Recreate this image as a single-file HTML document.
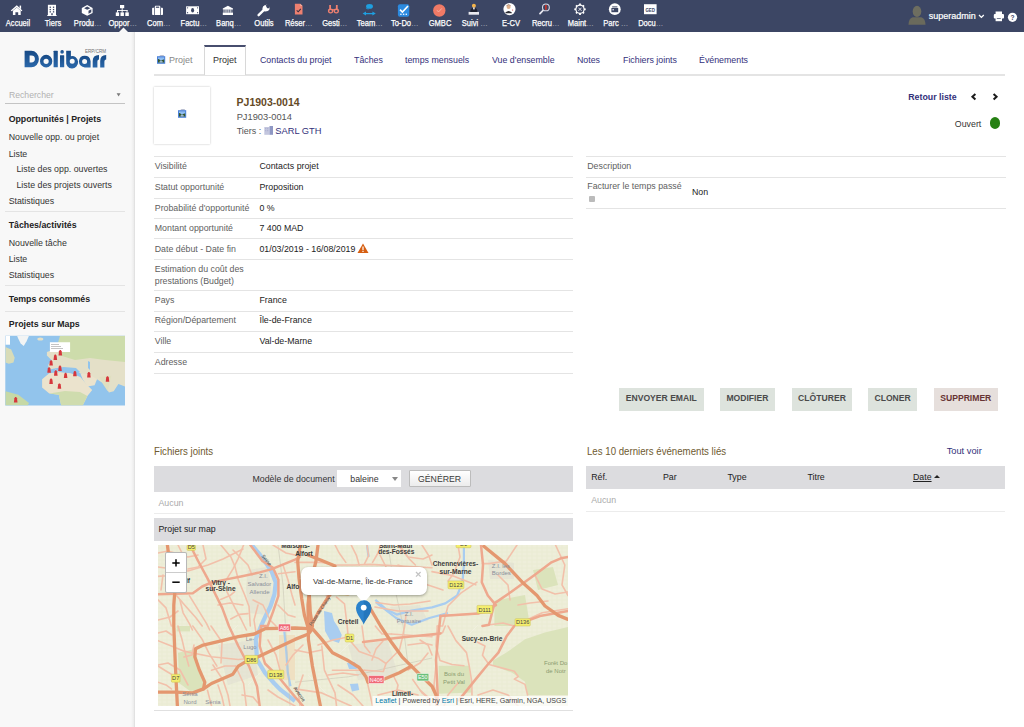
<!DOCTYPE html><html><head><meta charset="utf-8"><style>
html,body{margin:0;padding:0;width:1024px;height:727px;overflow:hidden;background:#fff;font-family:"Liberation Sans",sans-serif}
.t{position:absolute;white-space:nowrap;line-height:1}
.r{position:absolute}
svg{position:absolute;overflow:visible}
</style></head><body>
<div class="r" style="left:0px;top:0px;width:1024px;height:32px;background:#3c4664;"></div>
<div class="r" style="left:0px;top:32px;width:134px;height:695px;background:#f8f8f8;"></div>
<div class="r" style="left:131px;top:32px;width:3px;height:695px;background:linear-gradient(to right, rgba(0,0,0,0), rgba(0,0,0,0.05));"></div>
<div class="r" style="left:134px;top:32px;width:1px;height:695px;background:#e2e2e2;"></div>
<svg style="left:0;top:0" width="1024" height="32">
<g fill="#fff">
 <!-- home -->
 <polygon points="10.8,10.4 16.8,5.2 22.4,10.4 21.4,11.2 16.8,7.3 11.8,11.2"/>
 <rect x="19.6" y="5.6" width="1.5" height="3.2"/>
 <polygon points="12.9,10.8 16.8,7.6 20.7,10.8 20.7,15 18.2,15 18.2,12.3 15.4,12.3 15.4,15 12.9,15"/>
 <!-- building -->
 <rect x="47.9" y="4.8" width="8.1" height="10.6"/>
 <rect x="47.3" y="15" width="9.3" height="1"/>
 <!-- cube -->
 <polygon points="87.2,5 92.6,7.9 92.6,13 87.2,15.7 81.8,13 81.8,7.9"/>
 <!-- sitemap -->
 <rect x="120" y="5" width="4.2" height="3.2"/>
 <rect x="121.7" y="8" width="0.9" height="2.4"/>
 <rect x="117" y="10" width="10.5" height="0.9"/>
 <rect x="117" y="10" width="0.9" height="2.6"/><rect x="121.7" y="10" width="0.9" height="2.6"/><rect x="126.6" y="10" width="0.9" height="2.6"/>
 <rect x="115.8" y="12.4" width="3.3" height="3.6"/><rect x="120.5" y="12.4" width="3.4" height="3.6"/><rect x="125.3" y="12.4" width="3.5" height="3.6"/>
 <!-- briefcase -->
 <rect x="152.1" y="7.8" width="10.9" height="7.2" rx="0.8"/>
 <rect x="154.9" y="5.8" width="5.3" height="2.5" rx="0.6"/>
 <!-- money -->
 <rect x="186.1" y="6.3" width="12.9" height="7.9"/>
 <!-- bank -->
 <polygon points="222.8,8.6 227.9,5.8 233,8.6 233,9.5 222.8,9.5"/>
 <rect x="223.6" y="9.2" width="8.6" height="3.6"/>
 <rect x="222.8" y="12.6" width="10.2" height="2.4"/>
 <!-- wrench -->
 <path d="M258.6,15.2 L264.2,9.6" stroke="#fff" stroke-width="2.4" stroke-linecap="round"/>
 <path d="M263.2,8.8 A3.2,3.2 0 1 1 267.2,11.2 L266.6,9.4 L268.4,7.6 L266.9,5.6 L264.6,6.6 Z" />
 <circle cx="265.4" cy="8.6" r="2.9"/>
 <!-- E-CV circle -->
 <circle cx="509.5" cy="9.1" r="6.1"/>
 <!-- Parc circle -->
 <circle cx="614.8" cy="9.2" r="5.9"/>
 <!-- Docu -->
 <rect x="644" y="4.2" width="12.6" height="10"/>
 <!-- help -->
 <circle cx="1012.5" cy="17.3" r="4.6"/>
 <!-- printer -->
 <rect x="995.6" y="11.5" width="6.4" height="3"/>
 <rect x="993.8" y="14" width="10.2" height="4.6" rx="1"/>
 <rect x="995.6" y="17" width="6.4" height="4.2"/>
</g>
<g fill="#3c4664">
 <rect x="49.6" y="6.6" width="1.3" height="1.3"/><rect x="52.9" y="6.6" width="1.3" height="1.3"/>
 <rect x="49.6" y="8.9" width="1.3" height="1.3"/><rect x="52.9" y="8.9" width="1.3" height="1.3"/>
 <rect x="49.6" y="11.2" width="1.3" height="1.3"/><rect x="52.9" y="11.2" width="1.3" height="1.3"/>
 <rect x="51.3" y="13.2" width="1.4" height="2"/>
 <polygon points="87.2,6.5 90.3,8.2 87.2,9.7 84.1,8.2"/>
 <polygon points="88.5,10.7 91.3,9.3 91.3,12.3 88.5,13.8"/>
 <rect x="154.2" y="7.8" width="0.7" height="7.2"/><rect x="160.2" y="7.8" width="0.7" height="7.2"/>
 <rect x="155.9" y="6.6" width="3.3" height="1.2"/>
 <ellipse cx="192.6" cy="10.2" rx="1.5" ry="2.3"/>
 <circle cx="187.6" cy="7.8" r="0.6"/><circle cx="197.6" cy="7.8" r="0.6"/><circle cx="187.6" cy="12.7" r="0.6"/><circle cx="197.6" cy="12.7" r="0.6"/>
 <rect x="224.4" y="9.6" width="1.1" height="3"/><rect x="226.5" y="9.6" width="1.1" height="3"/><rect x="228.6" y="9.6" width="1.1" height="3"/><rect x="230.6" y="9.6" width="1.1" height="3"/>
 <path d="M265.6,5.2 L267.2,8.2 L269.4,8.2 L269.4,4.6 Z"/>
 <rect x="996.8" y="18.2" width="4" height="0.7"/>
</g>
<g stroke="#fff" stroke-width="1.8">
 <line x1="580" y1="3.6" x2="580" y2="15"/><line x1="574.3" y1="9.3" x2="585.7" y2="9.3"/>
 <line x1="576" y1="5.3" x2="584" y2="13.3"/><line x1="584" y1="5.3" x2="576" y2="13.3"/>
</g>
<circle cx="580" cy="9.3" r="4.7" fill="#fff"/>
<circle cx="580" cy="9.3" r="3.5" fill="#3c4664"/>
<path d="M578.4,7.7 L581.6,10.9 M581.6,7.7 L578.4,10.9" stroke="#e8e8f0" stroke-width="0.9"/>
<!-- Reser doc -->
<path d="M294.9,3.8 L300.3,3.8 L302.5,6 L302.5,14.4 L294.9,14.4 Z" fill="#ee8070"/>
<path d="M300.3,3.8 L300.3,6 L302.5,6 Z" fill="#f5b0a0"/>
<path d="M296.7,10.4 L298.2,11.8 L300.8,8.8" fill="none" stroke="#3c3040" stroke-width="1.1"/>
<!-- binoculars -->
<g fill="#ee8070">
 <ellipse cx="330.6" cy="11" rx="2.7" ry="2.4"/><ellipse cx="336.3" cy="11" rx="2.7" ry="2.4"/>
 <rect x="329.2" y="5" width="1.8" height="5"/><rect x="335.9" y="5" width="1.8" height="5"/>
 <rect x="331" y="9.2" width="4.9" height="1.3"/>
</g>
<ellipse cx="330.6" cy="11.2" rx="1.3" ry="1.1" fill="#3c4664"/><ellipse cx="336.3" cy="11.2" rx="1.3" ry="1.1" fill="#3c4664"/>
<!-- team -->
<g fill="#1e9fe0">
 <ellipse cx="369.5" cy="6.4" rx="3.4" ry="2.4"/>
 <path d="M365.6,7.5 Q366.3,9.8 369,9.6 L367,8.2 Z"/>
 <polygon points="362.6,13.6 366,11.6 366,12.9 372.4,12.9 372.4,11.6 375.8,13.6 372.4,15.6 372.4,14.3 366,14.3 366,15.6"/>
</g>
<!-- todo -->
<rect x="397.9" y="4.3" width="11.4" height="12.4" rx="2" fill="#2b8ae0"/>
<path d="M400,9.6 L402.4,12 L408,6" fill="none" stroke="#fff" stroke-width="1.6"/>
<g fill="#e8f2ff"><rect x="400.2" y="13.6" width="1.4" height="1.4"/><rect x="402.9" y="13.6" width="1.4" height="1.4"/><rect x="405.6" y="13.6" width="1.4" height="1.4"/></g>
<!-- GMBC -->
<circle cx="439.3" cy="10.5" r="6.2" fill="#f07a66"/>
<path d="M437,10.2 L438.5,12 L441.8,8.4" fill="none" stroke="#f7b4a8" stroke-width="0.9"/>
<!-- suivi -->
<rect x="468.6" y="11.9" width="10.4" height="2.8" fill="#e9e9ee"/>
<path d="M470.2,11.9 Q470.5,8 473.8,7.6 Q477.2,8 477.4,11.9 Z" fill="#1f2230"/>
<circle cx="473.9" cy="5.8" r="2" fill="#f3b34a"/>
<rect x="473.1" y="7.4" width="1.6" height="2" fill="#e9e9ee"/>
<!-- E-CV inner -->
<circle cx="508.6" cy="7" r="2" fill="#e0b08a"/>
<path d="M506.4,6.4 Q508.6,3.8 510.8,6.2 L510.6,5.4 Q508.6,3.6 506.6,5.4 Z" fill="#6b3a20"/>
<path d="M505.4,12.6 Q508.6,9.4 511.8,12.6 L511.8,13.2 L505.4,13.2 Z" fill="#2a2a30"/>
<circle cx="512.6" cy="10" r="0.6" fill="#d04040"/>
<!-- recru -->
<line x1="540" y1="13.6" x2="543.4" y2="10" stroke="#e8e8f0" stroke-width="1.8" stroke-linecap="round"/>
<circle cx="545.9" cy="7.4" r="3.4" fill="#3c4664" stroke="#d8d8e4" stroke-width="1.1"/>
<rect x="545.2" y="5" width="1.4" height="4.8" fill="#e03020"/>
<!-- parc inner -->
<rect x="611.4" y="8" width="6.8" height="4.2" fill="#3c4664"/>
<rect x="612.2" y="6.4" width="5.2" height="1" fill="#3c4664"/>
<rect x="612.4" y="9" width="1.6" height="1.4" fill="#c8c8d8"/>
<!-- docu inner -->
<text x="645.4" y="11.6" font-family="Liberation Sans" font-weight="700" font-size="4.6" fill="#3c4664" textLength="9.6" lengthAdjust="spacingAndGlyphs">GED</text>
<!-- help -->
<text x="1010.6" y="19.8" font-family="Liberation Sans" font-weight="700" font-size="6.6" fill="#3c4664">?</text>
<!-- chevron -->
<polyline points="979,15 981.4,17.4 983.8,15" fill="none" stroke="#fff" stroke-width="1.3"/>
<!-- avatar -->
<ellipse cx="917" cy="11.4" rx="4.3" ry="5.6" fill="#6e6e60"/>
<path d="M908.5,24.8 Q908.6,18.4 912.6,17.2 L921.4,17.2 Q925.4,18.4 925.5,24.8 Z" fill="#6a6a5c"/>
</svg>
<div class="t" style="left:-7.3px;top:19.25px;width:50px;text-align:center;font-size:9px;color:#fff;-webkit-text-stroke:0.25px #fff;transform:scaleX(0.84)">Accueil</div>
<div class="t" style="left:27.9px;top:19.25px;width:50px;text-align:center;font-size:9px;color:#fff;-webkit-text-stroke:0.25px #fff;transform:scaleX(0.84)">Tiers</div>
<div class="t" style="left:63.1px;top:19.25px;width:50px;text-align:center;font-size:9px;color:#fff;-webkit-text-stroke:0.25px #fff;transform:scaleX(0.84)">Produ<span style="color:rgba(255,255,255,0.5);-webkit-text-stroke:0;letter-spacing:0.6px">…</span></div>
<div class="t" style="left:98.3px;top:19.25px;width:50px;text-align:center;font-size:9px;color:#fff;-webkit-text-stroke:0.25px #fff;transform:scaleX(0.84)">Oppor<span style="color:rgba(255,255,255,0.5);-webkit-text-stroke:0;letter-spacing:0.6px">…</span></div>
<div class="t" style="left:133.5px;top:19.25px;width:50px;text-align:center;font-size:9px;color:#fff;-webkit-text-stroke:0.25px #fff;transform:scaleX(0.84)">Com<span style="color:rgba(255,255,255,0.5);-webkit-text-stroke:0;letter-spacing:0.6px">…</span></div>
<div class="t" style="left:168.7px;top:19.25px;width:50px;text-align:center;font-size:9px;color:#fff;-webkit-text-stroke:0.25px #fff;transform:scaleX(0.84)">Factu<span style="color:rgba(255,255,255,0.5);-webkit-text-stroke:0;letter-spacing:0.6px">…</span></div>
<div class="t" style="left:203.9px;top:19.25px;width:50px;text-align:center;font-size:9px;color:#fff;-webkit-text-stroke:0.25px #fff;transform:scaleX(0.84)">Banq<span style="color:rgba(255,255,255,0.5);-webkit-text-stroke:0;letter-spacing:0.6px">…</span></div>
<div class="t" style="left:239.1px;top:19.25px;width:50px;text-align:center;font-size:9px;color:#fff;-webkit-text-stroke:0.25px #fff;transform:scaleX(0.84)">Outils</div>
<div class="t" style="left:274.3px;top:19.25px;width:50px;text-align:center;font-size:9px;color:#fff;-webkit-text-stroke:0.25px #fff;transform:scaleX(0.84)">Réser<span style="color:rgba(255,255,255,0.5);-webkit-text-stroke:0;letter-spacing:0.6px">…</span></div>
<div class="t" style="left:309.5px;top:19.25px;width:50px;text-align:center;font-size:9px;color:#fff;-webkit-text-stroke:0.25px #fff;transform:scaleX(0.84)">Gesti<span style="color:rgba(255,255,255,0.5);-webkit-text-stroke:0;letter-spacing:0.6px">…</span></div>
<div class="t" style="left:344.7px;top:19.25px;width:50px;text-align:center;font-size:9px;color:#fff;-webkit-text-stroke:0.25px #fff;transform:scaleX(0.84)">Team<span style="color:rgba(255,255,255,0.5);-webkit-text-stroke:0;letter-spacing:0.6px">…</span></div>
<div class="t" style="left:379.9px;top:19.25px;width:50px;text-align:center;font-size:9px;color:#fff;-webkit-text-stroke:0.25px #fff;transform:scaleX(0.84)">To-Do<span style="color:rgba(255,255,255,0.5);-webkit-text-stroke:0;letter-spacing:0.6px">…</span></div>
<div class="t" style="left:415.1px;top:19.25px;width:50px;text-align:center;font-size:9px;color:#fff;-webkit-text-stroke:0.25px #fff;transform:scaleX(0.84)">GMBC</div>
<div class="t" style="left:450.3px;top:19.25px;width:50px;text-align:center;font-size:9px;color:#fff;-webkit-text-stroke:0.25px #fff;transform:scaleX(0.84)">Suivi <span style="color:rgba(255,255,255,0.5);-webkit-text-stroke:0;letter-spacing:0.6px">…</span></div>
<div class="t" style="left:485.5px;top:19.25px;width:50px;text-align:center;font-size:9px;color:#fff;-webkit-text-stroke:0.25px #fff;transform:scaleX(0.84)">E-CV</div>
<div class="t" style="left:520.7px;top:19.25px;width:50px;text-align:center;font-size:9px;color:#fff;-webkit-text-stroke:0.25px #fff;transform:scaleX(0.84)">Recru<span style="color:rgba(255,255,255,0.5);-webkit-text-stroke:0;letter-spacing:0.6px">…</span></div>
<div class="t" style="left:555.9px;top:19.25px;width:50px;text-align:center;font-size:9px;color:#fff;-webkit-text-stroke:0.25px #fff;transform:scaleX(0.84)">Maint<span style="color:rgba(255,255,255,0.5);-webkit-text-stroke:0;letter-spacing:0.6px">…</span></div>
<div class="t" style="left:591.1px;top:19.25px;width:50px;text-align:center;font-size:9px;color:#fff;-webkit-text-stroke:0.25px #fff;transform:scaleX(0.84)">Parc <span style="color:rgba(255,255,255,0.5);-webkit-text-stroke:0;letter-spacing:0.6px">…</span></div>
<div class="t" style="left:626.3px;top:19.25px;width:50px;text-align:center;font-size:9px;color:#fff;-webkit-text-stroke:0.25px #fff;transform:scaleX(0.84)">Docu<span style="color:rgba(255,255,255,0.5);-webkit-text-stroke:0;letter-spacing:0.6px">…</span></div>
<svg style="left:0;top:0" width="1024" height="32"><polygon points="119,32 123.5,27.6 128,32" fill="#f8f8f8"/></svg>
<div class="t" style="left:928.76px;top:11.75px;font-size:9px;color:#fff;font-weight:400;-webkit-text-stroke:0.2px #fff;">superadmin</div>
<svg style="left:0;top:0" width="134" height="80"><defs><linearGradient id="lg" x1="0" y1="0" x2="0" y2="1"><stop offset="0" stop-color="#174a86"/><stop offset="1" stop-color="#2b68aa"/></linearGradient></defs>
<g fill="url(#lg)" fill-rule="evenodd">
<path d="M24.6,50.8 H31.3 A7.6,8.25 0 0 1 31.3,67.3 H24.6 Z M29.6,55.6 H31.3 A3.6,3.45 0 0 1 31.3,62.5 H29.6 Z"/>
<path d="M40,61.15 A6.15,6.3 0 1 0 52.3,61.15 A6.15,6.3 0 1 0 40,61.15 Z M43.5,61.3 A2.6,2.6 0 1 0 48.7,61.3 A2.6,2.6 0 1 0 43.5,61.3 Z"/>
<rect x="53.6" y="50.8" width="4.2" height="16.5" rx="0.4"/>
<circle cx="62.1" cy="51.9" r="1.8"/>
<rect x="60" y="55.2" width="4.2" height="12.1" rx="0.4"/>
<path d="M66.2,50.8 H70.9 V56.2 A6,6.2 0 1 1 66.2,61.2 Z M69.7,61.3 A2.5,2.5 0 1 0 74.7,61.3 A2.5,2.5 0 1 0 69.7,61.3 Z"/>
<path d="M78.9,61.2 A5.9,6.2 0 0 1 90.6,61.2 V67.4 H84.8 A5.9,6.2 0 0 1 78.9,61.2 Z M82.1,61.4 A2.5,2.5 0 1 0 87.1,61.4 A2.5,2.5 0 1 0 82.1,61.4 Z"/>
<path d="M92.7,67.4 V61 Q92.7,55 99,55 V59.6 Q97.4,59.6 97.4,61.4 V67.4 Z"/>
<path d="M100.2,67.4 V61 Q100.2,55 106.2,55 V59.6 Q104.4,59.6 104.4,61.4 V67.4 Z"/>
</g>
<text x="85" y="52.7" font-family="Liberation Sans" font-size="4.6" fill="#707070" textLength="21" lengthAdjust="spacingAndGlyphs">ERP/CRM</text></svg>
<div class="t" style="left:8.82px;top:89.74px;font-size:9.6px;color:#b2b2b2;font-weight:400;transform:scaleX(0.9);transform-origin:8.82px 0;transform-origin:0 0;">Rechercher</div>
<svg style="left:0;top:0" width="134" height="110"><polygon points="116.6,93.3 120.6,93.3 118.6,96.6" fill="#7a7a7a"/></svg>
<div class="r" style="left:5px;top:103px;width:120px;height:1px;background:#c4c4c4;"></div>
<div class="t" style="left:8.67px;top:114.72px;font-size:8.8px;color:#222;font-weight:700;">Opportunités | Projets</div>
<div class="t" style="left:8.67px;top:133.12px;font-size:8.8px;color:#333;font-weight:400;">Nouvelle opp. ou projet</div>
<div class="t" style="left:8.67px;top:149.52px;font-size:8.8px;color:#333;font-weight:400;">Liste</div>
<div class="t" style="left:16.47px;top:165.22px;font-size:8.8px;color:#333;font-weight:400;">Liste des opp. ouvertes</div>
<div class="t" style="left:16.47px;top:180.92px;font-size:8.8px;color:#333;font-weight:400;">Liste des projets ouverts</div>
<div class="t" style="left:8.67px;top:196.92px;font-size:8.8px;color:#333;font-weight:400;">Statistiques</div>
<div class="r" style="left:5px;top:211px;width:120px;height:1px;background:#e4e4e4;"></div>
<div class="t" style="left:8.67px;top:220.82px;font-size:8.8px;color:#222;font-weight:700;">Tâches/activités</div>
<div class="t" style="left:8.67px;top:239.02px;font-size:8.8px;color:#333;font-weight:400;">Nouvelle tâche</div>
<div class="t" style="left:8.67px;top:255.02px;font-size:8.8px;color:#333;font-weight:400;">Liste</div>
<div class="t" style="left:8.67px;top:271.02px;font-size:8.8px;color:#333;font-weight:400;">Statistiques</div>
<div class="r" style="left:5px;top:285px;width:120px;height:1px;background:#e4e4e4;"></div>
<div class="t" style="left:8.67px;top:294.62px;font-size:8.8px;color:#222;font-weight:700;">Temps consommés</div>
<div class="r" style="left:5px;top:311px;width:120px;height:1px;background:#e4e4e4;"></div>
<div class="t" style="left:8.87px;top:319.92px;font-size:8.8px;color:#222;font-weight:700;">Projets sur Maps</div>
<svg style="left:0;top:0" width="134" height="410"><defs><clipPath id="wm"><rect x="5.3" y="335.8" width="119.7" height="69.8"/></clipPath></defs><g clip-path="url(#wm)"><rect x="5" y="335" width="121" height="71" fill="#92c4ec"/><path d="M46.9,351.9 L54.1,349.5 L60,341.2 L63.6,335.8 L125,335.8 L125,386.4 L118.4,384 L113.7,391.2 L108.9,392.4 L104.1,384 L97,379.3 L92.2,381.7 L87.4,375.7 L80.3,373.3 L76.7,371 L70.7,368.6 L63.6,368.6 L58.8,372.1 L54.1,368.6 L49.3,369.8 L48.1,365 L51.7,360.2 L46.9,355.5 Z" fill="#e4e0c8"/><path d="M60,335.8 L125,335.8 L125,362 L105,360 L90,358 L75,360 L62,356 L56,350 Z" fill="#cddcab"/><path d="M42.1,379.3 L49.3,373.3 L60,372.1 L70.7,373.3 L80.3,376.9 L87.4,385.3 L92.2,390 L87.4,396 L82.7,405.5 L61.2,405.5 L58.8,394.8 L49.3,393.6 L42.1,387.6 Z" fill="#ebe3cd"/><path d="M49.3,393.6 L58.8,394.8 L61.2,405.5 L82.7,405.5 L87.4,396 L80,392 L65,391 Z" fill="#cfdcae"/><path d="M80.3,373.3 L89.8,374.5 L97,379.3 L94.6,385.3 L87.4,386.4 L82.7,379.3 Z" fill="#ebe3cd"/><path d="M99.4,376.9 L111.3,375.7 L108.9,386.4 L107.7,391.2 L102.9,384 Z" fill="#e0dfc0"/><path d="M5.4,347.1 L11.2,349.5 L14.7,357.8 L13.5,362.6 L8.8,363.8 L5.4,362.6 Z" fill="#d8dcb8"/><path d="M5.4,391.2 L18.3,394.8 L29,403.1 L27.8,405.5 L5.4,405.5 Z" fill="#c6d9a6"/><path d="M17.1,335.8 L29,335.8 L26.6,341.2 L23.7,345.9 L20.7,343.5 L18.3,338.8 Z" fill="#f2f4f4"/><ellipse cx="40.3" cy="339" rx="3" ry="1.6" fill="#e4e0c8"/><path d="M54,368.6 L63.6,367 L76,368 L80,372 L70,373 L60,372 Z" fill="#92c4ec"/><path d="M88,361 L90,362 L90,370 L88,368 Z" fill="#92c4ec"/><rect x="5.4" y="335.8" width="4.6" height="8.9" fill="#fff"/><path d="M49.9,342.3 H70.1 V351.9 H61.2 L60,353.2 L58.8,351.9 H49.9 Z" fill="#fff"/><g fill="#888"><rect x="51" y="344" width="8" height="0.5"/><rect x="51" y="346" width="10" height="0.5"/><rect x="51" y="348" width="12" height="0.5"/></g><path d="M58.5,355.5 L59.0,351.3 L59.8,350.1 L60.8,350.1 L61.599999999999994,351.3 L62.099999999999994,355.5 Z" fill="#d6373c"/><path d="M53.5,360 L54.0,355.8 L54.8,354.6 L55.8,354.6 L56.599999999999994,355.8 L57.099999999999994,360 Z" fill="#d6373c"/><path d="M49.300000000000004,365.6 L49.800000000000004,361.40000000000003 L50.6,360.20000000000005 L51.6,360.20000000000005 L52.4,361.40000000000003 L52.9,365.6 Z" fill="#d6373c"/><path d="M47.300000000000004,372.7 L47.800000000000004,368.5 L48.6,367.3 L49.6,367.3 L50.4,368.5 L50.9,372.7 Z" fill="#d6373c"/><path d="M58.2,370.9 L58.7,366.7 L59.5,365.5 L60.5,365.5 L61.3,366.7 L61.8,370.9 Z" fill="#d6373c"/><path d="M54.0,375.7 L54.5,371.5 L55.3,370.3 L56.3,370.3 L57.099999999999994,371.5 L57.599999999999994,375.7 Z" fill="#d6373c"/><path d="M63.8,378.1 L64.3,373.90000000000003 L65.1,372.70000000000005 L66.1,372.70000000000005 L66.89999999999999,373.90000000000003 L67.39999999999999,378.1 Z" fill="#d6373c"/><path d="M73.10000000000001,376.3 L73.60000000000001,372.1 L74.4,370.90000000000003 L75.4,370.90000000000003 L76.2,372.1 L76.7,376.3 Z" fill="#d6373c"/><path d="M87.10000000000001,377.5 L87.60000000000001,373.3 L88.4,372.1 L89.4,372.1 L90.2,373.3 L90.7,377.5 Z" fill="#d6373c"/><path d="M105.7,381.7 L106.2,377.5 L107.0,376.3 L108.0,376.3 L108.8,377.5 L109.3,381.7 Z" fill="#d6373c"/><path d="M49.300000000000004,384 L49.800000000000004,379.8 L50.6,378.6 L51.6,378.6 L52.4,379.8 L52.9,384 Z" fill="#d6373c"/><path d="M57.6,388.8 L58.1,384.6 L58.9,383.40000000000003 L59.9,383.40000000000003 L60.699999999999996,384.6 L61.199999999999996,388.8 Z" fill="#d6373c"/><path d="M13.899999999999999,402.5 L14.399999999999999,398.3 L15.2,397.1 L16.2,397.1 L17.0,398.3 L17.5,402.5 Z" fill="#d6373c"/></g></svg>
<div class="r" style="left:154px;top:74px;width:851px;height:2px;background:#e4e4e4;"></div>
<div class="r" style="left:204px;top:45px;width:42px;height:30px;background:#fff;border:1px solid #d8d8d8;border-top:2px solid #474e6e;border-bottom:none;box-sizing:border-box"></div>
<svg style="left:157px;top:54.5px" width="9" height="9"><path d="M3.5,0.2 L6.5,0.2 L7.6,1.4 L1.5,1.4 Z" fill="#a0a8c0"/><rect x="0" y="1.2" width="8.2" height="7.6" fill="#4c82d8"/><rect x="1" y="2.4" width="6.2" height="5" fill="#8fbdf2"/><path d="M1,7.4 L1,4.2 Q2,3.6 2.8,5 Q4,6.4 5.2,5 Q6.2,4 7.2,4.6 L7.2,7.4 Z" fill="#34552c"/><rect x="2.6" y="6.2" width="3" height="1.2" fill="#b8d0f0"/></svg>
<div class="t" style="left:168.71px;top:55.27px;font-size:9.8px;color:#888;font-weight:400;transform:scaleX(0.92);transform-origin:168.71px 0;transform-origin:0 0;">Projet</div>
<div class="t" style="left:213.21px;top:55.27px;font-size:9.8px;color:#333;font-weight:400;transform:scaleX(0.92);transform-origin:213.21px 0;transform-origin:0 0;">Projet</div>
<div class="t" style="left:259.71px;top:55.27px;font-size:9.8px;color:#33307a;font-weight:400;transform:scaleX(0.9);transform-origin:259.71px 0;transform-origin:0 0;">Contacts du projet</div>
<div class="t" style="left:353.91px;top:55.27px;font-size:9.8px;color:#33307a;font-weight:400;transform:scaleX(0.9);transform-origin:353.91px 0;transform-origin:0 0;">Tâches</div>
<div class="t" style="left:405.21px;top:55.27px;font-size:9.8px;color:#33307a;font-weight:400;transform:scaleX(0.9);transform-origin:405.21px 0;transform-origin:0 0;">temps mensuels</div>
<div class="t" style="left:492.21px;top:55.27px;font-size:9.8px;color:#33307a;font-weight:400;transform:scaleX(0.9);transform-origin:492.21px 0;transform-origin:0 0;">Vue d&#x27;ensemble</div>
<div class="t" style="left:577.21px;top:55.27px;font-size:9.8px;color:#33307a;font-weight:400;transform:scaleX(0.9);transform-origin:577.21px 0;transform-origin:0 0;">Notes</div>
<div class="t" style="left:622.91px;top:55.27px;font-size:9.8px;color:#33307a;font-weight:400;transform:scaleX(0.9);transform-origin:622.91px 0;transform-origin:0 0;">Fichiers joints</div>
<div class="t" style="left:699.21px;top:55.27px;font-size:9.8px;color:#33307a;font-weight:400;transform:scaleX(0.9);transform-origin:699.21px 0;transform-origin:0 0;">Événements</div>
<div class="r" style="left:154px;top:87px;width:56px;height:57px;background:#fff;box-shadow:0 0 2px rgba(0,0,0,0.25)"></div>
<svg style="left:177.8px;top:109.2px" width="9" height="9"><path d="M3.5,0.2 L6.5,0.2 L7.6,1.4 L1.5,1.4 Z" fill="#a0a8c0"/><rect x="0" y="1.2" width="8.2" height="7.6" fill="#4c82d8"/><rect x="1" y="2.4" width="6.2" height="5" fill="#8fbdf2"/><path d="M1,7.4 L1,4.2 Q2,3.6 2.8,5 Q4,6.4 5.2,5 Q6.2,4 7.2,4.6 L7.2,7.4 Z" fill="#34552c"/><rect x="2.6" y="6.2" width="3" height="1.2" fill="#b8d0f0"/></svg>
<div class="t" style="left:236.57px;top:97.08px;font-size:10.5px;color:#654a26;font-weight:700;">PJ1903-0014</div>
<div class="t" style="left:236.64px;top:113.39px;font-size:9.3px;color:#555;font-weight:400;">PJ1903-0014</div>
<div class="t" style="left:236.66px;top:126.75px;font-size:9px;color:#555;font-weight:400;">Tiers : </div>
<svg style="left:264px;top:125px" width="10" height="11"><rect x="0.3" y="2" width="5.2" height="7.8" fill="#c3c6de"/><rect x="5.5" y="1" width="3.5" height="8.8" fill="#8f98c4"/><g fill="#a3a8cc"><rect x="1.2" y="3.2" width="1" height="1"/><rect x="3.2" y="3.2" width="1" height="1"/><rect x="1.2" y="5.2" width="1" height="1"/><rect x="3.2" y="5.2" width="1" height="1"/></g></svg>
<div class="t" style="left:275.34px;top:126.50px;font-size:9.3px;color:#33307a;font-weight:400;">SARL GTH</div>
<div class="t" style="left:908.27px;top:93.12px;font-size:8.8px;color:#33307a;font-weight:700;">Retour liste</div>
<svg style="left:968px;top:90px" width="40" height="14"><polyline points="7.4,4 4.4,6.8 7.4,9.6" fill="none" stroke="#1a1a1a" stroke-width="2"/><polyline points="25.6,4 28.6,6.8 25.6,9.6" fill="none" stroke="#1a1a1a" stroke-width="2"/></svg>
<div class="t" style="left:954.87px;top:120.02px;font-size:8.8px;color:#333;font-weight:400;">Ouvert</div>
<div class="r" style="left:989.7px;top:117.4px;width:10.6px;height:11.8px;border-radius:50%;background:#268013"></div>
<div class="r" style="left:154px;top:156px;width:419px;height:1px;background:#e4e4e4;"></div>
<div class="r" style="left:154px;top:177px;width:419px;height:1px;background:#e4e4e4;"></div>
<div class="r" style="left:154px;top:198px;width:419px;height:1px;background:#e4e4e4;"></div>
<div class="r" style="left:154px;top:218px;width:419px;height:1px;background:#e4e4e4;"></div>
<div class="r" style="left:154px;top:238px;width:419px;height:1px;background:#e4e4e4;"></div>
<div class="r" style="left:154px;top:259px;width:419px;height:1px;background:#e4e4e4;"></div>
<div class="r" style="left:154px;top:290px;width:419px;height:1px;background:#e4e4e4;"></div>
<div class="r" style="left:154px;top:311px;width:419px;height:1px;background:#e4e4e4;"></div>
<div class="r" style="left:154px;top:331px;width:419px;height:1px;background:#e4e4e4;"></div>
<div class="r" style="left:154px;top:352px;width:419px;height:1px;background:#e4e4e4;"></div>
<div class="r" style="left:154px;top:373px;width:419px;height:1px;background:#e4e4e4;"></div>
<div class="t" style="left:154.77px;top:162.02px;font-size:8.8px;color:#606060;font-weight:400;">Visibilité</div>
<div class="t" style="left:259.47px;top:162.02px;font-size:8.8px;color:#1c1c1c;font-weight:400;">Contacts projet</div>
<div class="t" style="left:154.77px;top:182.62px;font-size:8.8px;color:#606060;font-weight:400;">Statut opportunité</div>
<div class="t" style="left:259.47px;top:182.62px;font-size:8.8px;color:#1c1c1c;font-weight:400;">Proposition</div>
<div class="t" style="left:154.77px;top:203.52px;font-size:8.8px;color:#606060;font-weight:400;">Probabilité d&#x27;opportunité</div>
<div class="t" style="left:259.47px;top:203.52px;font-size:8.8px;color:#1c1c1c;font-weight:400;">0 %</div>
<div class="t" style="left:154.77px;top:223.62px;font-size:8.8px;color:#606060;font-weight:400;">Montant opportunité</div>
<div class="t" style="left:259.47px;top:223.62px;font-size:8.8px;color:#1c1c1c;font-weight:400;">7 400 MAD</div>
<div class="t" style="left:154.77px;top:244.92px;font-size:8.8px;color:#606060;font-weight:400;">Date début - Date fin</div>
<div class="t" style="left:259.47px;top:244.92px;font-size:8.8px;color:#1c1c1c;font-weight:400;">01/03/2019 - 16/08/2019</div>
<svg style="left:357px;top:243px" width="12" height="11"><polygon points="6,0.5 11.5,10 0.5,10" fill="#d65f12"/><rect x="5.4" y="3.5" width="1.2" height="3.6" fill="#fff"/><rect x="5.4" y="7.8" width="1.2" height="1.2" fill="#fff"/></svg>
<div class="t" style="left:154.77px;top:264.92px;font-size:8.8px;color:#606060;font-weight:400;">Estimation du coût des</div>
<div class="t" style="left:154.77px;top:277.12px;font-size:8.8px;color:#606060;font-weight:400;">prestations (Budget)</div>
<div class="t" style="left:154.77px;top:295.72px;font-size:8.8px;color:#606060;font-weight:400;">Pays</div>
<div class="t" style="left:259.47px;top:295.72px;font-size:8.8px;color:#1c1c1c;font-weight:400;">France</div>
<div class="t" style="left:154.77px;top:316.32px;font-size:8.8px;color:#606060;font-weight:400;">Région/Département</div>
<div class="t" style="left:259.47px;top:316.32px;font-size:8.8px;color:#1c1c1c;font-weight:400;">Île-de-France</div>
<div class="t" style="left:154.77px;top:336.92px;font-size:8.8px;color:#606060;font-weight:400;">Ville</div>
<div class="t" style="left:259.47px;top:336.92px;font-size:8.8px;color:#1c1c1c;font-weight:400;">Val-de-Marne</div>
<div class="t" style="left:154.77px;top:357.72px;font-size:8.8px;color:#606060;font-weight:400;">Adresse</div>
<div class="r" style="left:586px;top:156px;width:420px;height:1px;background:#e4e4e4;"></div>
<div class="r" style="left:586px;top:177px;width:420px;height:1px;background:#e4e4e4;"></div>
<div class="r" style="left:586px;top:208px;width:420px;height:1px;background:#e4e4e4;"></div>
<div class="t" style="left:587.27px;top:161.92px;font-size:8.8px;color:#606060;font-weight:400;">Description</div>
<div class="t" style="left:587.27px;top:182.12px;font-size:8.8px;color:#606060;font-weight:400;">Facturer le temps passé</div>
<div class="r" style="left:589px;top:196px;width:6px;height:6px;background:#bbb;border-radius:1px"></div>
<div class="t" style="left:691.97px;top:188.12px;font-size:8.8px;color:#1c1c1c;font-weight:400;">Non</div>
<div class="r" style="left:618.8px;top:388px;width:85.0px;height:22.5px;background:#dde3dd"></div>
<div class="t" style="left:618.8px;top:394.19px;width:85.0px;text-align:center;font-size:8.6px;font-weight:700;color:#4a4a4a">ENVOYER EMAIL</div>
<div class="r" style="left:719.8px;top:388px;width:55.2px;height:22.5px;background:#dde3dd"></div>
<div class="t" style="left:719.8px;top:394.19px;width:55.2px;text-align:center;font-size:8.6px;font-weight:700;color:#4a4a4a">MODIFIER</div>
<div class="r" style="left:791.6px;top:388px;width:60.8px;height:22.5px;background:#dde3dd"></div>
<div class="t" style="left:791.6px;top:394.19px;width:60.8px;text-align:center;font-size:8.6px;font-weight:700;color:#4a4a4a">CLÔTURER</div>
<div class="r" style="left:868.2px;top:388px;width:48.8px;height:22.5px;background:#dde3dd"></div>
<div class="t" style="left:868.2px;top:394.19px;width:48.8px;text-align:center;font-size:8.6px;font-weight:700;color:#4a4a4a">CLONER</div>
<div class="r" style="left:933.6px;top:388px;width:64.4px;height:22.5px;background:#e6dfdc"></div>
<div class="t" style="left:933.6px;top:394.19px;width:64.4px;text-align:center;font-size:8.6px;font-weight:700;color:#663333">SUPPRIMER</div>
<div class="t" style="left:154.18px;top:446.76px;font-size:10.4px;color:#6e5a30;font-weight:400;transform:scaleX(0.93);transform-origin:154.18px 0;transform-origin:0 0;">Fichiers joints</div>
<div class="r" style="left:154px;top:466px;width:419px;height:26px;background:#dcdcdf;"></div>
<div class="t" style="left:252.47px;top:474.72px;font-size:8.8px;color:#333;font-weight:400;">Modèle de document</div>
<div class="r" style="left:337px;top:470px;width:64px;height:17px;background:#fff;"></div>
<div class="t" style="left:350.27px;top:474.72px;font-size:8.8px;color:#333;font-weight:400;">baleine</div>
<svg style="left:390px;top:476px" width="10" height="6"><polygon points="2,1 8,1 5,5" fill="#888"/></svg>
<div class="r" style="left:409.2px;top:470.2px;width:61.6px;height:16.5px;box-sizing:border-box;border:1px solid #bcbcbc;border-radius:1px;background:linear-gradient(#fff,#ececec)"></div>
<div class="t" style="left:418.42px;top:474.25px;font-size:9.7px;color:#3a3a3a;font-weight:400;transform:scaleX(0.9);transform-origin:418.42px 0;transform-origin:0 0;">GÉNÉRER</div>
<div class="t" style="left:158.47px;top:498.52px;font-size:8.8px;color:#aaa;font-weight:400;">Aucun</div>
<div class="r" style="left:154px;top:513px;width:419px;height:1px;background:#ececec;"></div>
<div class="r" style="left:154px;top:518px;width:419px;height:23px;background:#dcdcdf;"></div>
<div class="t" style="left:158.47px;top:524.92px;font-size:8.8px;color:#222;font-weight:400;">Projet sur map</div>
<div class="r" style="left:154px;top:710px;width:419px;height:1px;background:#e0e0e0;"></div>
<div class="t" style="left:586.58px;top:446.76px;font-size:10.4px;color:#6e5a30;font-weight:400;transform:scaleX(0.93);transform-origin:586.58px 0;transform-origin:0 0;">Les 10 derniers événements liés</div>
<div class="t" style="left:946.64px;top:446.60px;font-size:9.3px;color:#33307a;font-weight:400;">Tout voir</div>
<div class="r" style="left:586px;top:466px;width:419px;height:23px;background:#dcdcdf;"></div>
<div class="t" style="left:591.17px;top:473.12px;font-size:8.8px;color:#222;font-weight:400;">Réf.</div>
<div class="t" style="left:662.97px;top:473.12px;font-size:8.8px;color:#222;font-weight:400;">Par</div>
<div class="t" style="left:727.47px;top:473.12px;font-size:8.8px;color:#222;font-weight:400;">Type</div>
<div class="t" style="left:807.47px;top:473.12px;font-size:8.8px;color:#222;font-weight:400;">Titre</div>
<div class="t" style="left:912.97px;top:473.12px;font-size:8.8px;color:#222;font-weight:400;text-decoration:underline">Date</div>
<svg style="left:933px;top:474px" width="8" height="5"><polygon points="1,4 4,1 7,4" fill="#222"/></svg>
<div class="t" style="left:591.17px;top:495.62px;font-size:8.8px;color:#aaa;font-weight:400;">Aucun</div>
<div class="r" style="left:586px;top:511px;width:419px;height:1px;background:#ececec;"></div>
<svg style="left:158px;top:545px" width="410" height="161" viewBox="0 0 410 161"><defs><clipPath id="mc"><rect x="0" y="0" width="410" height="161"/></clipPath><pattern id="tx" width="5" height="4" patternUnits="userSpaceOnUse"><rect x="0" y="0" width="3" height="2" fill="#f4f3e6"/><rect x="3.5" y="2.5" width="1" height="1" fill="#d9d9c6"/></pattern></defs><g clip-path="url(#mc)"><rect x="0" y="0" width="410" height="161" fill="#ecedd6"/><rect x="0" y="0" width="410" height="161" fill="url(#tx)" opacity="0.22"/><rect x="121" y="90" width="16" height="45" fill="#efe0c2"/><g stroke="#f4f2e6" stroke-width="0.8" opacity="0.7"><path d="M5,70 L25,90 M60,100 L80,80 M200,20 L220,40 M300,100 L320,80 M150,130 L170,150 M250,40 L270,20 M90,140 L110,120 M350,20 L370,40 M10,10 L30,30 M180,110 L200,90"/></g><path d="M90,25 L110,22 L114,50 L108,70 L92,68 L88,45 Z" fill="#dedcd0" opacity="0.5"/><path d="M232,62 L262,60 L270,76 L240,80 Z" fill="#dedcd0" opacity="0.5"/><path d="M330,15 L356,18 L356,34 L332,34 Z" fill="#dedcd0" opacity="0.5"/><path d="M60,100 L95,95 L100,130 L70,140 Z" fill="#dedcd0" opacity="0.5"/><path d="M190,100 L230,96 L240,130 L200,135 Z" fill="#dedcd0" opacity="0.5"/><path d="M335,115.5 L348.4,107.6 L367,94.3 L386.9,87.6 L410,82 L410,150 L369.6,150 L367,136.8 L353.7,127.5 L335,120.8 Z" fill="#dbe3bb"/><path d="M280.6,120.8 L311.2,120.8 L313.8,147.4 L280.6,148.7 Z" fill="#dbe3bb"/><path d="M20,107.8 L37,104 L41.5,125.2 L46.8,137.2 L45,145 L32,146 L21,138 Z" fill="#dbe3bb"/><path d="M336.4,55.8 L367,50 L372,81 L336.4,81 Z" fill="#dbe3bb"/><path d="M18.7,81 L32,81 L32,86.4 L18.7,86.4 Z" fill="#dbe3bb"/><path d="M375,25 L395,22 L400,40 L380,45 Z" fill="#dbe3bb"/><path d="M166,66 L174,68 L176,76 L180,82 L183.8,90 L181,98 L172,95 L167,86 Z" fill="#a9cdf0"/><path d="M191.9,139 L200,138.5 L201.2,145 L194,146.6 Z" fill="#a9cdf0"/><path d="M189,118 L197,117 L199,124 L191,124 Z" fill="#a9cdf0"/><path d="M93.7,0 L101.7,9.4 L108.4,18.7 L113.7,26.8 L117.7,37.5 L116.4,49.5 L112.4,61.5 L107,72.3 L103,81 L97.7,94.4 L99,114.5 L107,127.8 L116.4,138.5 L123,145.2 L137,156" fill="none" stroke="#a9cdf0" stroke-width="4.2" stroke-linejoin="round"/><path d="M305.9,0 L305.9,20 L304.5,37.2 L299.2,50.5 L287.3,58.4 L274,62.4 L253.4,65.6 L238.7,69.6 L228,64.2 L217.3,54.9" fill="none" stroke="#a9cdf0" stroke-width="2.2" stroke-linejoin="round"/><path d="M218,57.5 L238,73 L253.7,79.7 L271.4,73 L290,68" fill="none" stroke="#a9cdf0" stroke-width="2.2" stroke-linejoin="round"/><path d="M125.8,81 L128.4,107.8 L129.8,127.8 L132.5,141.2" fill="none" stroke="#a9cdf0" stroke-width="2.2" stroke-linejoin="round"/><path d="M209,0 L210.6,12" fill="none" stroke="#a9cdf0" stroke-width="2.2" stroke-linejoin="round"/><path d="M137,137.2 L190.5,131.8 L274,113 M120,0 L125,40 L128,90 L132,161 M230,0 L236,40 L245,80 L250,120" fill="none" stroke="#c9c6b6" stroke-width="0.6"/><path d="M0,31.4 L8,30.8 L20,28" fill="none" stroke="#f2c0aa" stroke-width="1.6" stroke-linejoin="round" stroke-linecap="round"/><path d="M0,54.9 L8,62.9 L13.4,81" fill="none" stroke="#f2c0aa" stroke-width="1.6" stroke-linejoin="round" stroke-linecap="round"/><path d="M18.7,50.8 L26.8,60.2 L37.5,72.3 L44.2,81" fill="none" stroke="#f2c0aa" stroke-width="1.6" stroke-linejoin="round" stroke-linecap="round"/><path d="M85.6,0 L80.3,13.4 L74.9,24.1 L68.2,34.8" fill="none" stroke="#f2c0aa" stroke-width="1.6" stroke-linejoin="round" stroke-linecap="round"/><path d="M137,26.8 L120.4,28.8" fill="none" stroke="#f2c0aa" stroke-width="1.6" stroke-linejoin="round" stroke-linecap="round"/><path d="M0,95.7 L13.4,101 L26.8,106.4 L53.5,111.8 L80.3,114.5 L93.7,113.2" fill="none" stroke="#f2c0aa" stroke-width="1.6" stroke-linejoin="round" stroke-linecap="round"/><path d="M34.8,81 L44.2,94.4 L50.8,107.8 L58.9,121.1" fill="none" stroke="#f2c0aa" stroke-width="1.6" stroke-linejoin="round" stroke-linecap="round"/><path d="M77.6,121.1 L85.6,138.5 L88.3,161" fill="none" stroke="#f2c0aa" stroke-width="1.6" stroke-linejoin="round" stroke-linecap="round"/><path d="M53,81 L64,97 L63,118" fill="none" stroke="#f2c0aa" stroke-width="1.6" stroke-linejoin="round" stroke-linecap="round"/><path d="M193.2,97 L201.2,106.4 L220,113.2 L228,118.5 L225.3,126.5 L206.6,125.2" fill="none" stroke="#f2c0aa" stroke-width="1.6" stroke-linejoin="round" stroke-linecap="round"/><path d="M228,118.5 L241.4,105 L244,94.4 L246.7,81 L248,70" fill="none" stroke="#f2c0aa" stroke-width="1.6" stroke-linejoin="round" stroke-linecap="round"/><path d="M233.3,89 L274,91.7" fill="none" stroke="#f2c0aa" stroke-width="1.6" stroke-linejoin="round" stroke-linecap="round"/><path d="M204,81 L206.6,101 L212,107.8" fill="none" stroke="#f2c0aa" stroke-width="1.6" stroke-linejoin="round" stroke-linecap="round"/><path d="M163.8,101 L166.4,125.2 L177,147.9 L178.5,161" fill="none" stroke="#f2c0aa" stroke-width="1.6" stroke-linejoin="round" stroke-linecap="round"/><path d="M137,143.9 L163.8,147.9 L193.2,161" fill="none" stroke="#f2c0aa" stroke-width="1.6" stroke-linejoin="round" stroke-linecap="round"/><path d="M178.5,52.2 L186.5,58.9 L189.2,81 L190,90" fill="none" stroke="#f2c0aa" stroke-width="1.6" stroke-linejoin="round" stroke-linecap="round"/><path d="M137,17.4 L163.8,17.4 L177,20 L197,20 L212,19.4 L274,22.7" fill="none" stroke="#f2c0aa" stroke-width="1.6" stroke-linejoin="round" stroke-linecap="round"/><path d="M209,0 L210.6,10.7 L206.6,18.7" fill="none" stroke="#f2c0aa" stroke-width="1.6" stroke-linejoin="round" stroke-linecap="round"/><path d="M274,26.6 L294,30.5 L311.2,37.2 L317.8,39.8" fill="none" stroke="#f2c0aa" stroke-width="1.6" stroke-linejoin="round" stroke-linecap="round"/><path d="M319,37.2 L303.2,47.8 L290,61 L284.6,81 L279.3,81" fill="none" stroke="#f2c0aa" stroke-width="1.6" stroke-linejoin="round" stroke-linecap="round"/><path d="M284.6,70.4 L319,69 L332.4,66.4" fill="none" stroke="#f2c0aa" stroke-width="1.6" stroke-linejoin="round" stroke-linecap="round"/><path d="M359,0 L348.4,16 L331,18.6 L324.5,18.6" fill="none" stroke="#f2c0aa" stroke-width="1.6" stroke-linejoin="round" stroke-linecap="round"/><path d="M397.5,0 L406.8,20 L404,39.8 L410,50.5" fill="none" stroke="#f2c0aa" stroke-width="1.6" stroke-linejoin="round" stroke-linecap="round"/><path d="M377,30 L384,44 L397,49 L410,47" fill="none" stroke="#f2c0aa" stroke-width="1.6" stroke-linejoin="round" stroke-linecap="round"/><path d="M369.6,74.4 L384.2,67.7 L410,63.7" fill="none" stroke="#f2c0aa" stroke-width="1.6" stroke-linejoin="round" stroke-linecap="round"/><path d="M274,90.3 L284.6,87.6 L287.3,81" fill="none" stroke="#f2c0aa" stroke-width="1.6" stroke-linejoin="round" stroke-linecap="round"/><path d="M290,81 L297.9,95.6 L308.5,107.6 L311.2,120.8 L313.8,136.8 L314,150" fill="none" stroke="#f2c0aa" stroke-width="1.6" stroke-linejoin="round" stroke-linecap="round"/><path d="M279.3,81 L278,101 L282,115.5 L294,119.5 L305.9,120.8" fill="none" stroke="#f2c0aa" stroke-width="1.6" stroke-linejoin="round" stroke-linecap="round"/><path d="M319,97 L327,101 L324.5,110.2 L331,119.5 L356.3,126.2 L360.3,131.5 L356.3,134.1 L367,139.4 L369.6,150" fill="none" stroke="#f2c0aa" stroke-width="1.6" stroke-linejoin="round" stroke-linecap="round"/><path d="M278,120 L276,140 L278,150" fill="none" stroke="#f2c0aa" stroke-width="1.6" stroke-linejoin="round" stroke-linecap="round"/><path d="M218,57.5 L236,60 L252,59 L272,56" fill="none" stroke="#f2c0aa" stroke-width="1.6" stroke-linejoin="round" stroke-linecap="round"/><path d="M217,62 L240,66 L270,66" fill="none" stroke="#f2c0aa" stroke-width="1.6" stroke-linejoin="round" stroke-linecap="round"/><path d="M0,8 L10,6 L30,12 L40,10" fill="none" stroke="#f2c0aa" stroke-width="1.6" stroke-linejoin="round" stroke-linecap="round"/><path d="M45,0 L48,14 L40,22 L30,24" fill="none" stroke="#f2c0aa" stroke-width="1.6" stroke-linejoin="round" stroke-linecap="round"/><path d="M62.9,0 L72.9,12 L76.9,21.4 L80.3,34.8 L87,50.8 L91,61.5 L92.3,81" fill="none" stroke="#f2c0aa" stroke-width="1.6" stroke-linejoin="round" stroke-linecap="round"/><path d="M115,0 L128,8 L137,10" fill="none" stroke="#f2c0aa" stroke-width="1.6" stroke-linejoin="round" stroke-linecap="round"/><path d="M60,60 L72,58 L85,60" fill="none" stroke="#f2c0aa" stroke-width="1.6" stroke-linejoin="round" stroke-linecap="round"/><path d="M0,75 L12,72 L20,66" fill="none" stroke="#f2c0aa" stroke-width="1.6" stroke-linejoin="round" stroke-linecap="round"/><path d="M150,30 L165,40 L170,55" fill="none" stroke="#f2c0aa" stroke-width="1.6" stroke-linejoin="round" stroke-linecap="round"/><path d="M240,0 L250,12 L265,14 L274,10" fill="none" stroke="#f2c0aa" stroke-width="1.6" stroke-linejoin="round" stroke-linecap="round"/><path d="M222,10 L232,30 L240,44" fill="none" stroke="#f2c0aa" stroke-width="1.6" stroke-linejoin="round" stroke-linecap="round"/><path d="M31.4,50.6 L40,64.7 L48.6,78.7 L51.7,85" fill="none" stroke="#f2c0aa" stroke-width="1.6" stroke-linejoin="round" stroke-linecap="round"/><path d="M22,55.3 L25.1,67.8 L31.4,78.7 L34.5,85" fill="none" stroke="#f2c0aa" stroke-width="1.6" stroke-linejoin="round" stroke-linecap="round"/><path d="M68.9,46.7 L76.7,62.3 L83,74 L88.4,85" fill="none" stroke="#f2c0aa" stroke-width="1.6" stroke-linejoin="round" stroke-linecap="round"/><path d="M72.8,74 L81.4,69.4 L90,68.6" fill="none" stroke="#f2c0aa" stroke-width="1.6" stroke-linejoin="round" stroke-linecap="round"/><path d="M62.6,54.5 L72,50.6 L76.7,46.7" fill="none" stroke="#f2c0aa" stroke-width="1.6" stroke-linejoin="round" stroke-linecap="round"/><path d="M0,22 L30,26 L50,20 L65,14 L85,4" fill="none" stroke="#f2c0aa" stroke-width="1.6" stroke-linejoin="round" stroke-linecap="round"/><path d="M20,0 L25,10 L22,20" fill="none" stroke="#f2c0aa" stroke-width="1.6" stroke-linejoin="round" stroke-linecap="round"/><path d="M95,55 L105,60 L112,75 L118,81" fill="none" stroke="#f2c0aa" stroke-width="1.6" stroke-linejoin="round" stroke-linecap="round"/><path d="M120,60 L130,70 L137,72" fill="none" stroke="#f2c0aa" stroke-width="1.6" stroke-linejoin="round" stroke-linecap="round"/><path d="M125,20 L130,35 L134,50 L137,60" fill="none" stroke="#f2c0aa" stroke-width="1.6" stroke-linejoin="round" stroke-linecap="round"/><path d="M0,120 L10,118 L22,125 L30,140" fill="none" stroke="#f2c0aa" stroke-width="1.6" stroke-linejoin="round" stroke-linecap="round"/><path d="M55,120 L65,135 L70,150 L72,161" fill="none" stroke="#f2c0aa" stroke-width="1.6" stroke-linejoin="round" stroke-linecap="round"/><path d="M110,95 L118,110 L122,125" fill="none" stroke="#f2c0aa" stroke-width="1.6" stroke-linejoin="round" stroke-linecap="round"/><path d="M160,100 L175,95 L190,92" fill="none" stroke="#f2c0aa" stroke-width="1.6" stroke-linejoin="round" stroke-linecap="round"/><path d="M170,130 L185,128 L200,130" fill="none" stroke="#f2c0aa" stroke-width="1.6" stroke-linejoin="round" stroke-linecap="round"/><path d="M180,140 L195,150 L205,161" fill="none" stroke="#f2c0aa" stroke-width="1.6" stroke-linejoin="round" stroke-linecap="round"/><path d="M220,150 L240,145 L260,150" fill="none" stroke="#f2c0aa" stroke-width="1.6" stroke-linejoin="round" stroke-linecap="round"/><path d="M250,100 L265,98 L274,100" fill="none" stroke="#f2c0aa" stroke-width="1.6" stroke-linejoin="round" stroke-linecap="round"/><path d="M255,35 L270,40 L285,45" fill="none" stroke="#f2c0aa" stroke-width="1.6" stroke-linejoin="round" stroke-linecap="round"/><path d="M240,20 L255,25 L262,35" fill="none" stroke="#f2c0aa" stroke-width="1.6" stroke-linejoin="round" stroke-linecap="round"/><path d="M300,0 L302,12 L296,28 L290,36" fill="none" stroke="#f2c0aa" stroke-width="1.6" stroke-linejoin="round" stroke-linecap="round"/><path d="M340,30 L350,40 L352,55" fill="none" stroke="#f2c0aa" stroke-width="1.6" stroke-linejoin="round" stroke-linecap="round"/><path d="M360,60 L372,58 L390,56" fill="none" stroke="#f2c0aa" stroke-width="1.6" stroke-linejoin="round" stroke-linecap="round"/><path d="M320,150 L335,145 L350,150 L360,161" fill="none" stroke="#f2c0aa" stroke-width="1.6" stroke-linejoin="round" stroke-linecap="round"/><path d="M262,145 L270,152 L272,161" fill="none" stroke="#f2c0aa" stroke-width="1.6" stroke-linejoin="round" stroke-linecap="round"/><path d="M235,130 L240,140 L238,150" fill="none" stroke="#f2c0aa" stroke-width="1.6" stroke-linejoin="round" stroke-linecap="round"/><path d="M172,40 L180,48 L190,50" fill="none" stroke="#f2c0aa" stroke-width="1.6" stroke-linejoin="round" stroke-linecap="round"/><path d="M145,100 L135,110 L128,120" fill="none" stroke="#f2c0aa" stroke-width="1.6" stroke-linejoin="round" stroke-linecap="round"/><path d="M49.5,145.2 L53.5,161" fill="none" stroke="#f2c0aa" stroke-width="1.6" stroke-linejoin="round" stroke-linecap="round"/><path d="M20,81 L24,94.4 L26.8,106.4 L30.8,121" fill="none" stroke="#f2c0aa" stroke-width="1.6" stroke-linejoin="round" stroke-linecap="round"/><path d="M0,121 L6.7,125.2 L13.4,129.2" fill="none" stroke="#f2c0aa" stroke-width="1.6" stroke-linejoin="round" stroke-linecap="round"/><path d="M0,137.2 L8,139.9 L13.4,143.9" fill="none" stroke="#f2c0aa" stroke-width="1.6" stroke-linejoin="round" stroke-linecap="round"/><path d="M53.5,125.2 L67,121 L77.6,121" fill="none" stroke="#f2c0aa" stroke-width="1.6" stroke-linejoin="round" stroke-linecap="round"/><path d="M110,145 L120,152 L137,161" fill="none" stroke="#f2c0aa" stroke-width="1.6" stroke-linejoin="round" stroke-linecap="round"/><path d="M137,105 L150.4,107.8 L163.8,105" fill="none" stroke="#f2c0aa" stroke-width="1.6" stroke-linejoin="round" stroke-linecap="round"/><path d="M174.5,125.2 L194.5,125.2 L206.6,125.2" fill="none" stroke="#f2c0aa" stroke-width="1.6" stroke-linejoin="round" stroke-linecap="round"/><path d="M209.3,137.2 L214.6,161" fill="none" stroke="#f2c0aa" stroke-width="1.6" stroke-linejoin="round" stroke-linecap="round"/><path d="M217.3,81 L224,89 L233.3,89" fill="none" stroke="#f2c0aa" stroke-width="1.6" stroke-linejoin="round" stroke-linecap="round"/><path d="M254.7,134.5 L264,147.9 L274,156" fill="none" stroke="#f2c0aa" stroke-width="1.6" stroke-linejoin="round" stroke-linecap="round"/><path d="M177,0 L181.2,8 L187.8,17.4" fill="none" stroke="#f2c0aa" stroke-width="1.6" stroke-linejoin="round" stroke-linecap="round"/><path d="M193.2,0 L198.5,10.7 L201.2,20" fill="none" stroke="#f2c0aa" stroke-width="1.6" stroke-linejoin="round" stroke-linecap="round"/><path d="M222.6,0 L220,8 L214.6,17.4" fill="none" stroke="#f2c0aa" stroke-width="1.6" stroke-linejoin="round" stroke-linecap="round"/><path d="M241.4,0 L250.7,13.4 L257.4,20" fill="none" stroke="#f2c0aa" stroke-width="1.6" stroke-linejoin="round" stroke-linecap="round"/><path d="M264,0 L270.8,10.7 L274,20" fill="none" stroke="#f2c0aa" stroke-width="1.6" stroke-linejoin="round" stroke-linecap="round"/><path d="M0,88 L8,86 L14,90" fill="none" stroke="#f2c0aa" stroke-width="1.6" stroke-linejoin="round" stroke-linecap="round"/><path d="M100,60 L96,75 L98,88" fill="none" stroke="#f2c0aa" stroke-width="1.6" stroke-linejoin="round" stroke-linecap="round"/><path d="M75,5 L90,20 L94,30" fill="none" stroke="#f2c0aa" stroke-width="1.6" stroke-linejoin="round" stroke-linecap="round"/><path d="M5,30 L3,45" fill="none" stroke="#f2c0aa" stroke-width="1.6" stroke-linejoin="round" stroke-linecap="round"/><path d="M26,112 L34,110 L36,100" fill="none" stroke="#f2c0aa" stroke-width="1.6" stroke-linejoin="round" stroke-linecap="round"/><path d="M60,140 L64,152 L66,161" fill="none" stroke="#f2c0aa" stroke-width="1.6" stroke-linejoin="round" stroke-linecap="round"/><path d="M84,150 L95,152 L100,158" fill="none" stroke="#f2c0aa" stroke-width="1.6" stroke-linejoin="round" stroke-linecap="round"/><path d="M145,130 L140,145 L142,161" fill="none" stroke="#f2c0aa" stroke-width="1.6" stroke-linejoin="round" stroke-linecap="round"/><path d="M225,96 L218,104 L214,115" fill="none" stroke="#f2c0aa" stroke-width="1.6" stroke-linejoin="round" stroke-linecap="round"/><path d="M250,125 L262,118 L270,108" fill="none" stroke="#f2c0aa" stroke-width="1.6" stroke-linejoin="round" stroke-linecap="round"/><path d="M262,95 L270,100 L274,110" fill="none" stroke="#f2c0aa" stroke-width="1.6" stroke-linejoin="round" stroke-linecap="round"/><path d="M330,80 L345,78 L356,81" fill="none" stroke="#f2c0aa" stroke-width="1.6" stroke-linejoin="round" stroke-linecap="round"/><path d="M300,138 L290,150 L286,161" fill="none" stroke="#f2c0aa" stroke-width="1.6" stroke-linejoin="round" stroke-linecap="round"/><path d="M0,49.2 L34.8,48.2 L44.2,41.5 L53.5,37.5 L69.6,34.1 L83,31.4 L101.7,27.4 L113.7,24.1 L137,14.7 L142,12" fill="none" stroke="#eea88e" stroke-width="2.5" stroke-linejoin="round" stroke-linecap="round"/><path d="M33.4,2.7 L40.1,16 L49.5,33.4 L57.5,49.5 L64.2,62.9 L70.9,81 L80.3,101 L91,121.1 L99,141.2 L101.7,161" fill="none" stroke="#eea88e" stroke-width="2.5" stroke-linejoin="round" stroke-linecap="round"/><path d="M92.3,0 L104.4,16 L115,22.7 L120.4,34.8 L120.4,50.8 L115,66.9 L109.7,81 L103,81 L101.7,101 L107,118.5 L120.4,131.8 L137,151.9 L145,161" fill="none" stroke="#eea88e" stroke-width="2.5" stroke-linejoin="round" stroke-linecap="round"/><path d="M323,0 L325,20 L323.8,37.2 L329.8,50.5 L336.4,58.4 L331,79.7 L324.5,81" fill="none" stroke="#eea88e" stroke-width="2.5" stroke-linejoin="round" stroke-linecap="round"/><path d="M336.4,58.4 L353.7,46.5 L377.6,29.2 L393.5,17.3 L402.8,13.3 L410,12" fill="none" stroke="#eea88e" stroke-width="2.5" stroke-linejoin="round" stroke-linecap="round"/><path d="M356.3,81 L348.4,91.6 L340.4,107.6 L329.8,119.5 L317.8,134.1 L307.2,147.4 L300.6,155.4" fill="none" stroke="#eea88e" stroke-width="2.5" stroke-linejoin="round" stroke-linecap="round"/><path d="M364.4,77.5 L382,71 L410,66" fill="none" stroke="#eea88e" stroke-width="2.5" stroke-linejoin="round" stroke-linecap="round"/><path d="M282.5,71 L320,68.6 L338,60" fill="none" stroke="#eea88e" stroke-width="2.5" stroke-linejoin="round" stroke-linecap="round"/><path d="M282.5,71 L280,93 L278,115 L280,155" fill="none" stroke="#eea88e" stroke-width="2.5" stroke-linejoin="round" stroke-linecap="round"/><path d="M205,97 L238,93 L282.5,88.5" fill="none" stroke="#eea88e" stroke-width="2.5" stroke-linejoin="round" stroke-linecap="round"/><path d="M9.4,0 L10.4,8" fill="none" stroke="#e4976f" stroke-width="3.3" stroke-linejoin="round" stroke-linecap="round"/><path d="M16.7,48.2 L15.8,60.2 L15.8,81 L17.4,121.1 L18.7,147.9 L19.4,161" fill="none" stroke="#e4976f" stroke-width="3.3" stroke-linejoin="round" stroke-linecap="round"/><path d="M0,147.2 L17.4,147.2 L34.8,147.9 L45.5,143.9 L53.5,138.5 L74.9,129.2 L80.3,121.1 L87,117.1 L100.3,111.8 L137,94.4 L150.4,89 L154.4,83.7" fill="none" stroke="#e4976f" stroke-width="3.3" stroke-linejoin="round" stroke-linecap="round"/><path d="M45.5,143.9 L46.8,137.2 L41.5,125.2 L36.8,111.8 L37.5,103.7 L44.2,100.4 L64.2,95.7 L80.3,91.7 L96.3,89 L107,83.7 L137,83 L150.4,83.7" fill="none" stroke="#e4976f" stroke-width="3.3" stroke-linejoin="round" stroke-linecap="round"/><path d="M142.4,0 L139.7,16 L141,33.4 L143.7,53.5 L146.4,70 L150.4,83.7 L150.4,94.4 L154.4,121.1 L158.4,141.2 L162.4,161" fill="none" stroke="#e4976f" stroke-width="3.3" stroke-linejoin="round" stroke-linecap="round"/><path d="M160,0 L158,16 L152,40 L150,60 L150.4,83.7" fill="none" stroke="#e4976f" stroke-width="3.3" stroke-linejoin="round" stroke-linecap="round"/><path d="M150,10 L165,16 L177,21" fill="none" stroke="#e4976f" stroke-width="3.3" stroke-linejoin="round" stroke-linecap="round"/><path d="M151.2,48 L152.3,67.8 L154.5,81" fill="none" stroke="#e4976f" stroke-width="3.3" stroke-linejoin="round" stroke-linecap="round"/><path d="M154.4,83.7 L163.8,94.4 L174.5,107.8 L190.5,115.8 L201.2,122.5 L207.9,131.8 L209.9,137.2" fill="none" stroke="#e4976f" stroke-width="3.3" stroke-linejoin="round" stroke-linecap="round"/><path d="M210,134 L225.3,134.5 L241.4,127.8 L253.4,121.1" fill="none" stroke="#e4976f" stroke-width="3.3" stroke-linejoin="round" stroke-linecap="round"/><path d="M205,55 L212,63 L222.6,81 L233.3,97 L244,111.8 L253.4,121.1 L262.8,130.5 L274,141.2 L278,150 L279,161" fill="none" stroke="#e4976f" stroke-width="3.3" stroke-linejoin="round" stroke-linecap="round"/><path d="M182,38 L171.5,50.2 L160,68 L150.5,86" fill="none" stroke="#e4976f" stroke-width="3.3" stroke-linejoin="round" stroke-linecap="round"/><path d="M325.8,1.3 L347,18.6 L364.3,37.2 L379,50.5 L387,61 L400.2,70.4 L410,74.4" fill="none" stroke="#e4976f" stroke-width="3.3" stroke-linejoin="round" stroke-linecap="round"/><rect x="29" y="0" width="8.5" height="5.4" rx="1" fill="#f4ee6e" stroke="#c9be55" stroke-width="0.5"/><text x="33.25" y="3.6000000000000005" font-family="Liberation Sans" font-size="5.6" text-anchor="middle" fill="#444">D5</text><rect x="290" y="35.9" width="15.9" height="7.9" rx="1" fill="#f4ee6e" stroke="#c9be55" stroke-width="0.5"/><text x="297.95" y="42.0" font-family="Liberation Sans" font-size="5.6" text-anchor="middle" fill="#444">D123</text><rect x="319" y="60.4" width="15.4" height="8" rx="1" fill="#f4ee6e" stroke="#c9be55" stroke-width="0.5"/><text x="326.7" y="66.60000000000001" font-family="Liberation Sans" font-size="5.6" text-anchor="middle" fill="#444">D111</text><rect x="357" y="73.7" width="15.3" height="7.3" rx="1" fill="#f4ee6e" stroke="#c9be55" stroke-width="0.5"/><text x="364.65" y="79.2" font-family="Liberation Sans" font-size="5.6" text-anchor="middle" fill="#444">D136</text><rect x="87" y="110.4" width="12.7" height="8.1" rx="1" fill="#f4ee6e" stroke="#c9be55" stroke-width="0.5"/><text x="93.35" y="116.7" font-family="Liberation Sans" font-size="5.6" text-anchor="middle" fill="#444">D86</text><rect x="13.4" y="129.2" width="8.6" height="8" rx="1" fill="#f4ee6e" stroke="#c9be55" stroke-width="0.5"/><text x="17.7" y="135.39999999999998" font-family="Liberation Sans" font-size="5.6" text-anchor="middle" fill="#444">D7</text><rect x="109.7" y="125.2" width="16.1" height="8.6" rx="1" fill="#f4ee6e" stroke="#c9be55" stroke-width="0.5"/><text x="117.75" y="132.0" font-family="Liberation Sans" font-size="5.6" text-anchor="middle" fill="#444">D138</text><rect x="187.2" y="89" width="8.7" height="8" rx="1" fill="#f4ee6e" stroke="#c9be55" stroke-width="0.5"/><text x="191.54999999999998" y="95.2" font-family="Liberation Sans" font-size="5.6" text-anchor="middle" fill="#444">D1</text><rect x="298" y="-3" width="15" height="5.7" rx="1" fill="#f4ee6e" stroke="#c9be55" stroke-width="0.5"/><text x="305.5" y="0.9000000000000001" font-family="Liberation Sans" font-size="5.6" text-anchor="middle" fill="#444">D1</text><rect x="180" y="46" width="12" height="4" rx="1" fill="#f4ee6e" stroke="#c9be55" stroke-width="0.5"/><text x="186.0" y="48.2" font-family="Liberation Sans" font-size="5.6" text-anchor="middle" fill="#444">D2</text><rect x="120.4" y="79" width="12.1" height="7.4" rx="1" fill="#f06a78" stroke="#fff" stroke-width="0.5"/><text x="126.5" y="84.8" font-family="Liberation Sans" font-size="5.4" text-anchor="middle" fill="#fff">A86</text><rect x="210.6" y="130.5" width="15.4" height="8" rx="1" fill="#f06a78" stroke="#fff" stroke-width="0.5"/><text x="218.3" y="136.7" font-family="Liberation Sans" font-size="5.4" text-anchor="middle" fill="#fff">N406</text><rect x="258.8" y="128.5" width="12" height="7.4" rx="1" fill="#6cc07a" stroke="#fff" stroke-width="0.5"/><text x="264.8" y="134.4" font-family="Liberation Sans" font-size="5.4" text-anchor="middle" fill="#fff">E50</text><text x="53.5" y="39.5" font-family="Liberation Sans" font-size="6.6" font-weight="700" fill="#3a3a3a" text-anchor="start" >Vitry -</text><text x="47.5" y="46.2" font-family="Liberation Sans" font-size="6.6" font-weight="700" fill="#3a3a3a" text-anchor="start" >sur-Seine</text><text x="28" y="37.5" font-family="Liberation Sans" font-size="6.6" font-weight="700" fill="#3a3a3a" text-anchor="start" >if</text><text x="101" y="33.4" font-family="Liberation Sans" font-size="6" font-weight="400" fill="#8a8f9a" text-anchor="start" >Z.I.</text><text x="89.6" y="40.8" font-family="Liberation Sans" font-size="6" font-weight="400" fill="#8a8f9a" text-anchor="start" >Salvador</text><text x="91.5" y="48.8" font-family="Liberation Sans" font-size="6" font-weight="400" fill="#8a8f9a" text-anchor="start" >Allende</text><text x="128.4" y="44.2" font-family="Liberation Sans" font-size="6.6" font-weight="700" fill="#3a3a3a" text-anchor="start" >Alfo</text><text x="137.5" y="3.3" font-family="Liberation Sans" font-size="6.6" font-weight="700" fill="#3a3a3a" text-anchor="middle" >Maisons-</text><text x="146" y="10.7" font-family="Liberation Sans" font-size="6.6" font-weight="700" fill="#3a3a3a" text-anchor="middle" >Alfort</text><text x="238" y="3" font-family="Liberation Sans" font-size="6.6" font-weight="700" fill="#3a3a3a" text-anchor="middle" >Saint-Maur</text><text x="238.3" y="9.4" font-family="Liberation Sans" font-size="6.6" font-weight="700" fill="#3a3a3a" text-anchor="middle" >des-Fossés</text><text x="297.5" y="21.2" font-family="Liberation Sans" font-size="6.6" font-weight="700" fill="#3a3a3a" text-anchor="middle" >Chennevières-</text><text x="297.5" y="28.6" font-family="Liberation Sans" font-size="6.6" font-weight="700" fill="#3a3a3a" text-anchor="middle" >sur-Marne</text><text x="333.8" y="22.6" font-family="Liberation Sans" font-size="6" font-weight="400" fill="#8a8f9a" text-anchor="start" >Z.I. les</text><text x="333.8" y="29.9" font-family="Liberation Sans" font-size="6" font-weight="400" fill="#8a8f9a" text-anchor="start" >Bordes</text><text x="251" y="71" font-family="Liberation Sans" font-size="6" font-weight="400" fill="#8a8f9a" text-anchor="middle" >Z.I.</text><text x="251" y="78" font-family="Liberation Sans" font-size="6" font-weight="400" fill="#8a8f9a" text-anchor="middle" >Portuaire</text><text x="179.8" y="79" font-family="Liberation Sans" font-size="6.6" font-weight="700" fill="#3a3a3a" text-anchor="start" >Creteil</text><text x="324" y="96.3" font-family="Liberation Sans" font-size="6.6" font-weight="700" fill="#3a3a3a" text-anchor="middle" >Sucy-en-Brie</text><text x="92" y="95.7" font-family="Liberation Sans" font-size="6" font-weight="400" fill="#8a8f9a" text-anchor="middle" >Le-</text><text x="92" y="103.7" font-family="Liberation Sans" font-size="6" font-weight="400" fill="#8a8f9a" text-anchor="middle" >Lugo</text><text x="32" y="151.2" font-family="Liberation Sans" font-size="6" font-weight="400" fill="#8a8f9a" text-anchor="middle" >Sénia</text><text x="32" y="158.6" font-family="Liberation Sans" font-size="6" font-weight="400" fill="#8a8f9a" text-anchor="middle" >Nord</text><text x="55" y="158.6" font-family="Liberation Sans" font-size="6" font-weight="400" fill="#8a8f9a" text-anchor="middle" >Sénia</text><text x="244.5" y="150.6" font-family="Liberation Sans" font-size="6.6" font-weight="700" fill="#3a3a3a" text-anchor="middle" >Limeil-</text><text x="296" y="130.8" font-family="Liberation Sans" font-size="6" font-weight="400" fill="#8a9a70" text-anchor="middle" >Bois du</text><text x="296" y="139.4" font-family="Liberation Sans" font-size="6" font-weight="400" fill="#8a9a70" text-anchor="middle" >Petit Val</text><text x="386" y="119.5" font-family="Liberation Sans" font-size="6" font-weight="400" fill="#8a9a70" text-anchor="start" >Forêt Do</text><text x="388" y="128.1" font-family="Liberation Sans" font-size="6" font-weight="400" fill="#8a9a70" text-anchor="start" >de Notr</text><text x="163" y="67" font-family="Liberation Sans" font-size="4.6" font-weight="400" fill="#555" text-anchor="middle" transform="rotate(-56 163 67)">Route de Choisy</text><text x="140" y="150" font-family="Liberation Sans" font-size="5" font-weight="400" fill="#3a3a3a" text-anchor="middle" transform="rotate(55 140 150)">Avenue</text><text x="112" y="10" font-family="Liberation Sans" font-size="5" font-weight="400" fill="#3a3a3a" text-anchor="middle" transform="rotate(50 103 8)">Seine</text><rect x="214.5" y="151" width="196" height="10" fill="rgba(255,255,255,0.75)"/></g></svg>
<div class="t" style="left:375.3px;top:697.87px;font-size:7.1px;color:#444"><span style="color:#0078a8">Leaflet</span> | Powered by <span style="color:#0078a8">Esri</span> | Esri, HERE, Garmin, NGA, USGS</div>
<div class="r" style="left:165px;top:552px;width:22px;height:41px;box-sizing:border-box;border:1px solid rgba(0,0,0,0.28);border-radius:2px;background:#fff"></div>
<div class="r" style="left:166px;top:572px;width:20px;height:1px;background:#ccc"></div>
<svg style="left:165px;top:552px" width="22" height="41"><path d="M7.3,10.9 H14.7 M11,7.2 V14.6" stroke="#000" stroke-width="1.5"/><path d="M7.3,30.2 H14.7" stroke="#000" stroke-width="1.5"/></svg>
<div class="r" style="left:301px;top:566.6px;width:126px;height:28.6px;border-radius:7px;background:#fff;box-shadow:0 1px 3px rgba(0,0,0,0.35)"></div>
<svg style="left:350px;top:590px" width="28" height="16"><polygon points="6.6,5 20.6,5 13.5,13.2" fill="#fff"/></svg>
<div class="t" style="left:312.92px;top:577.50px;font-size:8px;color:#333">Val-de-Marne, Île-de-France</div>
<svg style="left:412px;top:568px" width="12" height="12"><path d="M4,4 L8.6,8.6 M8.6,4 L4,8.6" stroke="#c3c3c3" stroke-width="1.3"/></svg>
<svg style="left:354px;top:599px" width="22" height="28"><path d="M9.7,25.4 C8.4,21 2,15.6 2,9 A7.7,7.8 0 0 1 17.4,9 C17.4,15.6 11,21 9.7,25.4 Z" fill="#2c83cc"/><path d="M9.7,25.4 C11,21 17.4,15.6 17.4,9 A7.7,7.8 0 0 0 9.7,1.2 Z" fill="#1f6fb2" opacity="0.6"/><circle cx="9.7" cy="8.6" r="2.9" fill="#fff"/></svg>
</body></html>
